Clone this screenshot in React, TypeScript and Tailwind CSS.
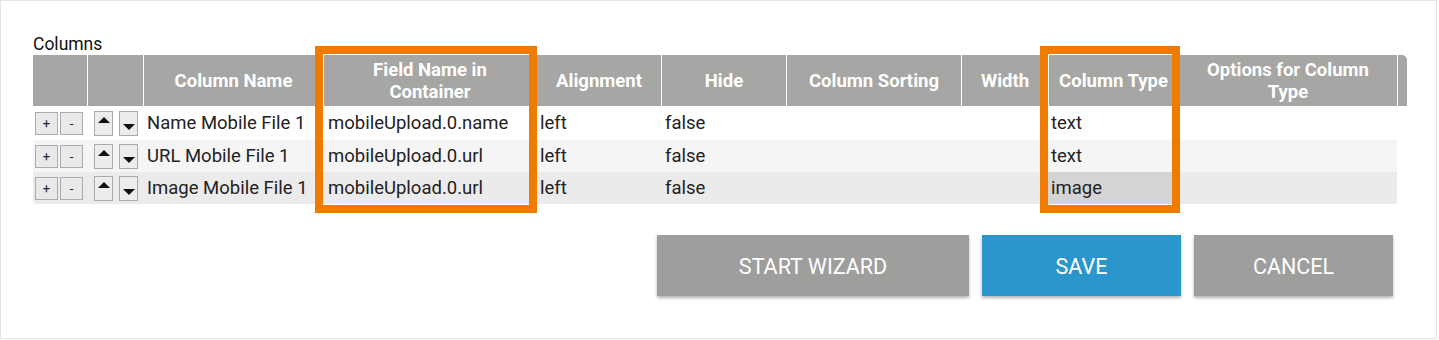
import React from "react";

const cols = "grid-cols-[54px_56px_180px_213px_125px_125px_175px_87px_130px_219px]";

function SmallBtn({ children }: { children: React.ReactNode }) {
  return (
    <div className="w-[23px] h-[23px] bg-[#e9e9e9] border border-[#ababab] flex items-center justify-center text-[13px] leading-none text-[#222]">
      {children}
    </div>
  );
}

function ArrowBtn({ up }: { up: boolean }) {
  return (
    <div className={`w-[19px] h-[25px] bg-[#ececec] border border-[#ababab] flex justify-center ${up ? "items-start pt-[5px]" : "items-end pb-[5px]"}`}>
      <svg width="12" height="6" viewBox="0 0 12 6">
        {up ? <polygon points="0,6 6,0 12,6" fill="#111" /> : <polygon points="0,0 12,0 6,6" fill="#111" />}
      </svg>
    </div>
  );
}

const rows = [
  { name: "Name Mobile File 1", field: "mobileUpload.0.name", type: "text", bg: "bg-white", h: "h-[34px]", sel: false },
  { name: "URL Mobile File 1", field: "mobileUpload.0.url", type: "text", bg: "bg-[#f5f5f5]", h: "h-[32px]", sel: false },
  { name: "Image Mobile File 1", field: "mobileUpload.0.url", type: "image", bg: "bg-[#ebebeb]", h: "h-[32px]", sel: true },
];

export default function App() {
  return (
    <div className="relative w-[1437px] h-[339px] border border-[#e4e4e4] bg-white pl-[32px] pt-[33px] font-['Roboto',sans-serif] text-[#222]">
      <div className="text-[17.5px] leading-[20px] h-[21px] text-[#111]">Columns</div>
      <div className="w-[1374px]">
        <div className={`grid grid-cols-[54px_56px_180px_213px_125px_125px_175px_87px_130px_219px_10px] h-[51px] bg-[#a6a6a4] rounded-tr-[5px] text-white font-bold text-[18.5px] leading-[22px]`}>
          <div />
          <div className="border-l border-white" />
          <div className="border-l border-white flex items-center justify-center">Column Name</div>
          <div className="border-l border-white flex items-center justify-center text-center">Field Name in<br />Container</div>
          <div className="border-l border-white flex items-center justify-center">Alignment</div>
          <div className="border-l border-white flex items-center justify-center">Hide</div>
          <div className="border-l border-white flex items-center justify-center">Column Sorting</div>
          <div className="border-l border-white flex items-center justify-center">Width</div>
          <div className="border-l border-white flex items-center justify-center">Column Type</div>
          <div className="border-l border-white flex items-center justify-center text-center">Options for Column<br />Type</div>
          <div className="border-l border-white" />
        </div>
        {rows.map((r, i) => (
          <div key={i} className={`grid ${cols} w-[1364px] ${r.h} ${r.bg} ${i === 2 ? "rounded-bl-[4px]" : ""} text-[18.5px] items-stretch`}>
            <div className="flex items-center gap-[2px] pl-[2px]">
              <SmallBtn>+</SmallBtn>
              <SmallBtn>-</SmallBtn>
            </div>
            <div className="flex items-center gap-[6px] pl-[7px]">
              <ArrowBtn up />
              <ArrowBtn up={false} />
            </div>
            <div className="flex items-center pl-[4px] pt-[2px] whitespace-nowrap">{r.name}</div>
            <div className="flex items-center pl-[5px] pt-[2px] whitespace-nowrap">{r.field}</div>
            <div className="flex items-center pl-[4px] pt-[2px]">left</div>
            <div className="flex items-center pl-[4px] pt-[2px]">false</div>
            <div />
            <div />
            <div className={`flex items-center pl-[3px] pt-[2px] ${r.sel ? "bg-[#d4d4d4]" : ""}`}>{r.type}</div>
            <div />
          </div>
        ))}
        <div className="flex justify-end pr-[14px] mt-[31px] gap-[13px]">
          <button className="w-[312px] h-[61px] pt-[3px] bg-[#9e9e9c] text-white text-[21.5px] shadow-[0_2px_3px_rgba(0,0,0,0.3)]">START WIZARD</button>
          <button className="w-[199px] h-[61px] pt-[3px] bg-[#2b96cc] text-white text-[21.5px] shadow-[0_2px_3px_rgba(0,0,0,0.3)]">SAVE</button>
          <button className="w-[199px] h-[61px] pt-[3px] bg-[#9e9e9c] text-white text-[21.5px] shadow-[0_2px_3px_rgba(0,0,0,0.3)]">CANCEL</button>
        </div>
      </div>
      <div className="absolute left-[314px] top-[45px] w-[222px] h-[167px] border-[8px] border-[#ef7b00]" />
      <div className="absolute left-[1039px] top-[45px] w-[140px] h-[167px] border-[8px] border-[#ef7b00]" />
    </div>
  );
}
